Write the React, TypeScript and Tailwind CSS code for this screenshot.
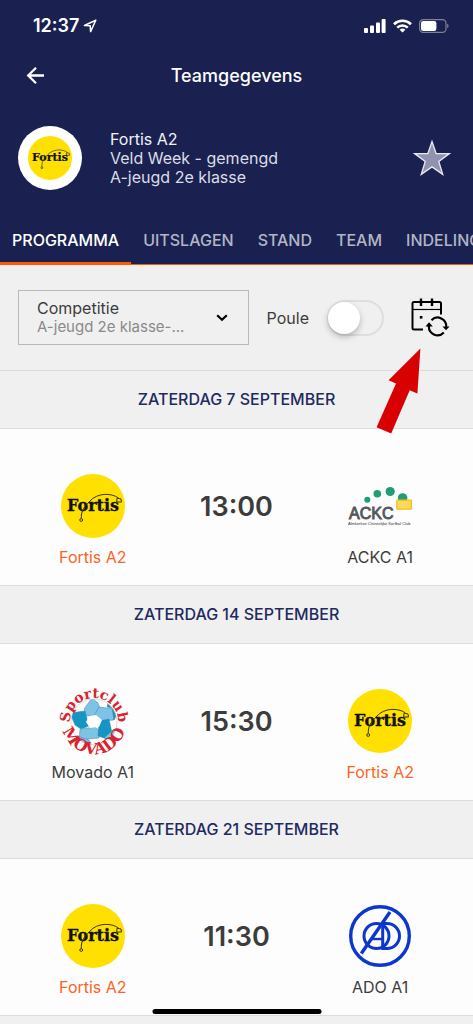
import type { ReactNode } from "react";
import { useState } from "react";
import clsx from "clsx";

type Club = "fortis" | "ackc" | "movado" | "ado";

interface Team {
  name: string;
  club: Club;
}

interface Match {
  date: string;
  time: string;
  home: Team;
  away: Team;
}

const FORTIS: Team = { name: "Fortis A2", club: "fortis" };

const MATCHES: Match[] = [
  { date: "Zaterdag 7 september", time: "13:00", home: FORTIS, away: { name: "ACKC A1", club: "ackc" } },
  { date: "Zaterdag 14 september", time: "15:30", home: { name: "Movado A1", club: "movado" }, away: FORTIS },
  { date: "Zaterdag 21 september", time: "11:30", home: FORTIS, away: { name: "ADO A1", club: "ado" } },
];

const TABS = ["Programma", "Uitslagen", "Stand", "Team", "Indeling"];

export default function App() {
  return (
    <div className="min-h-screen bg-[#f0f0f0] font-['Inter',sans-serif] text-[#3c3c3c]">
      <header className="bg-[#1a2151] text-white">
        <StatusBar />
        <div className="grid h-12 grid-cols-[1fr_auto_1fr] items-center px-6">
          <button type="button" aria-label="Terug" className="w-6">
            <BackIcon />
          </button>
          <h1 className="text-lg font-medium">Teamgegevens</h1>
        </div>
        <TeamInfo />
        <TabBar />
      </header>
      <main>
        <FilterBar />
        {MATCHES.map((match) => (
          <MatchDay key={match.date} match={match} />
        ))}
      </main>
      <div className="fixed bottom-[10px] left-1/2 h-[5px] w-[169px] -translate-x-1/2 rounded-full bg-black" />
    </div>
  );
}

function StatusBar() {
  return (
    <div className="flex h-[52px] items-center justify-between pr-6 pl-[33px]">
      <div className="flex items-center gap-1">
        <span className="text-lg font-semibold">12:37</span>
        <svg viewBox="0 0 14 14" className="size-[14px]" fill="none" stroke="currentColor" strokeWidth="1.5" strokeLinejoin="round">
          <path d="M12.8 1.2 1.4 6.5 7.2 6.8 7.6 12.6Z" />
        </svg>
      </div>
      <div className="flex items-center gap-[7px]">
        <svg viewBox="0 0 22 14" className="h-[14px] w-[22px]" fill="currentColor">
          <rect x="0" y="9" width="4" height="5" rx="1" />
          <rect x="6" y="6.5" width="4" height="7.5" rx="1" />
          <rect x="12" y="3.5" width="4" height="10.5" rx="1" />
          <rect x="17.6" y="0" width="4" height="14" rx="1" />
        </svg>
        <svg viewBox="0 0 19 14" className="h-[14px] w-[19px]" fill="none" stroke="currentColor" strokeWidth="2.6">
          <path d="M1 5.2a12.3 12.3 0 0 1 17 0" />
          <path d="M4.2 8.6a7.6 7.6 0 0 1 10.6 0" />
          <path d="M9.5 13.6 6.6 10.8a4.2 4.2 0 0 1 5.8 0Z" fill="currentColor" stroke="none" />
        </svg>
        <svg viewBox="0 0 30 14" className="h-[14px] w-[30px]">
          <rect x="0.6" y="0.6" width="26.4" height="12.8" rx="3.6" fill="none" stroke="#7c809b" strokeWidth="1.2" />
          <rect x="2" y="2" width="15.4" height="10" rx="2.2" fill="#fff" />
          <path d="M28.2 4.8a2.4 2.4 0 0 1 0 4.4Z" fill="#7c809b" />
        </svg>
      </div>
    </div>
  );
}

function TeamInfo() {
  return (
    <div className="flex items-center px-[18px] pt-[26px] pb-[26px]">
      <div className="flex size-16 items-center justify-center rounded-full bg-white">
        <FortisLogo className="size-11" />
      </div>
      <div className="ml-7 flex-1 text-base leading-[19px] text-[#dcdde5]">
        <p className="text-[#f1f1f5]">Fortis A2</p>
        <p>Veld Week - gemengd</p>
        <p>A-jeugd 2e klasse</p>
      </div>
      <button type="button" aria-label="Favoriet" className="mr-1">
        <svg viewBox="0 0 38 38" className="size-[38px]" fill="#8f93b1" stroke="#e9e9ee" strokeWidth="1.3">
          <path d="M19 2.5 23.1 14.5 36.3 14.6 25.8 22.5 29.7 35.4 19 27.9 8.3 35.4 12.2 22.5 1.7 14.6 14.9 14.5Z" />
        </svg>
      </button>
    </div>
  );
}

function TabBar() {
  const [active, setActive] = useState(TABS[0]);

  return (
    <nav className="flex h-[49px] overflow-hidden border-b border-[#ff5a00]">
      {TABS.map((tab) => (
        <button
          key={tab}
          type="button"
          onClick={() => setActive(tab)}
          className={clsx(
            "shrink-0 border-b-2 px-3 pt-[2px] text-base font-medium uppercase",
            tab === active ? "border-[#ff5a00] text-white" : "border-transparent text-[#b3b5c6]",
          )}
        >
          {tab}
        </button>
      ))}
    </nav>
  );
}

function FilterBar() {
  return (
    <div className="relative flex items-center border-b border-[#dcdcdc] py-[25px] pr-[23px] pl-[18px]">
      <div className="relative h-[55px] min-w-0 flex-1 border border-[#b9b9b9] pt-2 pl-[18px]">
        <label htmlFor="competitie" className="block text-base leading-[18px]">
          Competitie
        </label>
        <select
          id="competitie"
          className="block w-full appearance-none bg-transparent pr-10 text-[15px] leading-5 text-[#8a8a8a] outline-none"
        >
          <option>A-jeugd 2e klasse-...</option>
        </select>
        <svg
          viewBox="0 0 12 8"
          className="pointer-events-none absolute top-[23px] right-5 h-2 w-3"
          fill="none"
          stroke="#000"
          strokeWidth="2.2"
        >
          <path d="M1.2 1.2 6 5.8 10.8 1.2" />
        </svg>
      </div>
      <label htmlFor="poule" className="ml-[18px] text-base">
        Poule
      </label>
      <span className="relative ml-[18px] h-9 w-[57px]">
        <input
          id="poule"
          type="checkbox"
          role="switch"
          className="peer size-full appearance-none rounded-full border-2 border-[#dedede] checked:bg-[#ff5a00]"
        />
        <span className="pointer-events-none absolute top-[2px] left-[1px] size-8 rounded-full bg-white shadow-[0_3px_6px_rgba(0,0,0,0.25)] peer-checked:left-6" />
      </span>
      <button type="button" aria-label="Synchroniseer agenda" className="ml-[27px]">
        <CalendarSyncIcon />
      </button>
      <svg
        viewBox="0 0 45 86"
        className="pointer-events-none absolute top-[83px] right-[52px] z-10 h-[86px] w-[45px]"
        fill="#d80000"
      >
        <path d="M44.4 .6 41.4 45.6 33.7 42.3 15.2 85.6.6 79.2 20 35.6 12.6 32.3Z" />
      </svg>
    </div>
  );
}

function MatchDay({ match }: { match: Match }) {
  return (
    <section className="border-b border-[#dcdcdc]">
      <h2 className="border-b border-[#dcdcdc] text-center text-base leading-[57px] font-medium text-[#1f2a60] uppercase">
        {match.date}
      </h2>
      <div className="grid grid-cols-3 bg-[#fdfdfd] px-[21px] pt-[45px] pb-4">
        <TeamCell team={match.home} />
        <p className="text-center text-[27px] leading-[66px] font-semibold">{match.time}</p>
        <TeamCell team={match.away} />
      </div>
    </section>
  );
}

function TeamCell({ team }: { team: Team }) {
  return (
    <div className="flex flex-col items-center gap-[7px]">
      <ClubLogo club={team.club} />
      <p className={clsx("text-base", team.club === "fortis" && "text-[#fb641f]")}>{team.name}</p>
    </div>
  );
}

function ClubLogo({ club }: { club: Club }) {
  switch (club) {
    case "fortis":
      return <FortisLogo className="size-16" />;
    case "ackc":
      return <AckcLogo />;
    case "movado":
      return <MovadoLogo />;
    case "ado":
      return <AdoLogo />;
  }
}

function FortisLogo({ className }: { className: string }) {
  return (
    <svg viewBox="0 0 64 64" className={className} role="img" aria-label="Fortis">
      <circle cx="32" cy="32" r="32" fill="#ffe000" />
      <text
        x="32"
        y="37"
        textAnchor="middle"
        fill="#111"
        stroke="#111"
        strokeWidth="0.3"
        className="font-['DejaVu_Serif',serif] text-[16px] font-bold"
      >
        Fortis
      </text>
      <g fill="none" stroke="#3b3600" strokeWidth="1">
        <path d="M57.5 24C50 18.5 36 19 29 27 22 34 20 38 20.3 44.5" />
        <path d="M56 24.2 60 25 60.5 28H55.7Z" />
        <circle cx="20.2" cy="46" r="1.4" />
      </g>
    </svg>
  );
}

function AckcLogo() {
  return (
    <svg viewBox="0 0 64 64" className="size-16" role="img" aria-label="ACKC">
      <g fill="#1f9d78">
        <circle cx="19.3" cy="25.7" r="3" />
        <circle cx="29.3" cy="19.7" r="3.8" />
        <circle cx="42.2" cy="17.5" r="4.6" />
        <circle cx="54.6" cy="24" r="4.8" />
      </g>
      <rect x="48.8" y="26.2" width="14.6" height="9" rx="0.5" fill="#ffd95a" stroke="#f3bf1c" strokeWidth="1.2" />
      <text
        x="1"
        y="45"
        fill="#55585a"
        stroke="#55585a"
        strokeWidth="0.9"
        className="font-['Liberation_Sans',sans-serif] text-[16px]"
      >
        ACKC
      </text>
      <text x="0" y="50.5" fill="#333" className="font-['Liberation_Sans',sans-serif] text-[4px]">
        Almkerkse Christelijke Korfbal Club
      </text>
    </svg>
  );
}

function MovadoLogo() {
  return (
    <svg viewBox="0 0 64 64" className="size-16 overflow-visible" role="img" aria-label="Sportclub Movado">
      <defs>
        <path id="movado-top" d="M9.8 40A24.2 24.2 0 1 1 56.2 40" />
        <path id="movado-bottom" d="M1.8 26A32 32 0 1 0 64.2 26" />
        <clipPath id="movado-ball">
          <circle cx="33" cy="33" r="23" />
        </clipPath>
      </defs>
      <g clipPath="url(#movado-ball)">
        <circle cx="33" cy="33" r="23" fill="#fff" />
        <g stroke="#4386a8" strokeWidth="0.5">
          <path d="M23 20 31 9 37 14 39 19 33 27 26 27Z" fill="#7cc3e6" />
          <path d="M38 18 53 20 53 31 42 32 33 27Z" fill="#7cc3e6" />
          <path d="M48 10 58 22 53 31 51 19 46 18Z" fill="#1595c4" />
          <path d="M9 24 24 22 28 37 20 40 14 36Z" fill="#1595c4" />
          <path d="M19 40 34 38 39 42 38 49 27 50 18 52Z" fill="#7cc3e6" />
          <path d="M38 32 48 30 51 44 46 50 37 47Z" fill="#1595c4" />
          <path d="M17 47 28 51 31 57 21 54Z" fill="#7cc3e6" />
          <path d="M43 49 52 41 58 39 52 50Z" fill="#7cc3e6" />
        </g>
        <path d="M28 27 35 26 41 31 38 38 29 39 25 33Z" fill="#fff" />
      </g>
      <circle cx="33" cy="33" r="23" fill="none" stroke="#b9b9b9" strokeWidth="0.5" />
      <g fill="#d9232e" className="font-['DejaVu_Serif',serif] font-bold">
        <text textAnchor="middle" className="text-[14px]">
          <textPath href="#movado-top" startOffset="50%">
            Sportclub
          </textPath>
        </text>
        <text textAnchor="middle" className="text-[16px]">
          <textPath href="#movado-bottom" startOffset="50%">
            MOVADO
          </textPath>
        </text>
      </g>
    </svg>
  );
}

function AdoLogo() {
  return (
    <svg viewBox="0 0 64 64" className="size-16" role="img" aria-label="ADO" fill="none" stroke="#0b37cf" strokeWidth="3">
      <circle cx="32" cy="32" r="29.3" strokeWidth="3.4" />
      <circle cx="28.5" cy="32" r="12.5" />
      <path d="M34.7 19.5H39A12.5 12.5 0 0 1 39 44.5H34.7Z" />
      <path d="M42 8 13.3 49.5" strokeWidth="3.4" />
      <path d="M24 35H34.7" strokeWidth="2.4" />
    </svg>
  );
}

function IconSvg({ viewBox, className, children }: { viewBox: string; className: string; children: ReactNode }) {
  return (
    <svg viewBox={viewBox} className={className} fill="none" stroke="currentColor" strokeWidth="2">
      {children}
    </svg>
  );
}

function BackIcon() {
  return (
    <IconSvg viewBox="0 0 24 24" className="size-6">
      <path d="M20 11.5H4.5M12 3.8 4.2 11.5 12 19.3" strokeWidth="2.3" />
    </IconSvg>
  );
}

function CalendarSyncIcon() {
  return (
    <IconSvg viewBox="0 0 39 39" className="size-[39px] text-black">
      <path d="M12 31.5H3Q1.5 31.5 1.5 30V5.5Q1.5 4 3 4H28.5Q30 4 30 5.5V16.5" />
      <path d="M2 11.5H30" strokeWidth="1.2" />
      <path d="M10 .5V8M21 .5V8" strokeWidth="2.4" />
      <path d="M8.8 18H11.4V20.6H8.8Z" fill="currentColor" stroke="none" />
      <path d="M20.5 22.2A8.6 8.6 0 0 1 35.2 29" strokeWidth="2.2" />
      <path d="M32.8 34.5A8.6 8.6 0 0 1 18 27.5" strokeWidth="2.2" />
      <path d="M31.5 28.5H38.6L35 32.3ZM14.5 28.5H21.8L18 24.3Z" fill="currentColor" stroke="none" />
    </IconSvg>
  );
}
